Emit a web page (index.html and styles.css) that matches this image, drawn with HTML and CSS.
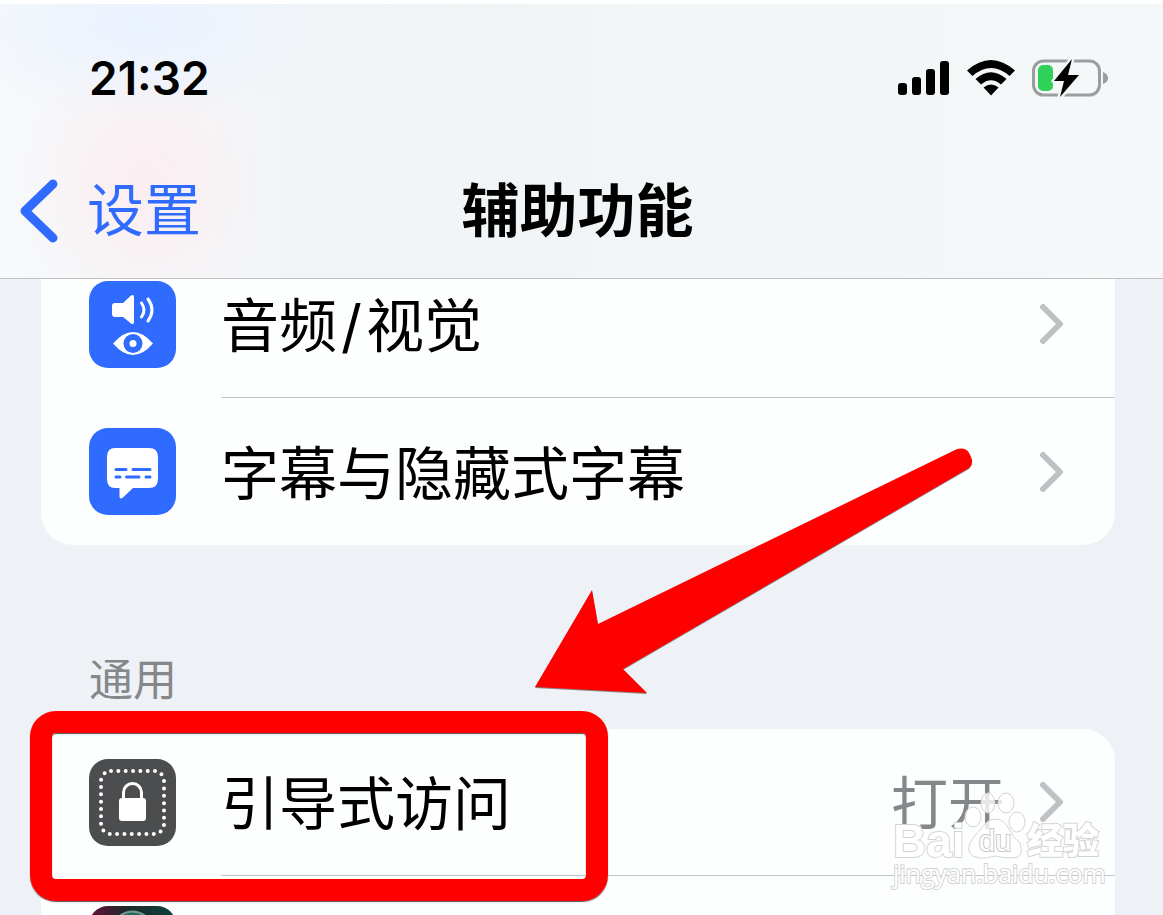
FILE: index.html
```html
<!DOCTYPE html>
<html lang="zh-CN">
<head>
<meta charset="utf-8">
<meta name="viewport" content="width=device-width, initial-scale=1">
<title>辅助功能</title>
<link rel="stylesheet" href="styles.css">
</head>
<body>
<div class="screen">
  <header class="header">
    <div class="status">
      <time class="clock">21:32</time>
      <div class="indicators">
        <svg class="signal" width="52" height="36" viewBox="0 0 52 36" aria-label="信号"><rect y="23" width="9" height="12" rx="3"/><rect x="14" y="17" width="9" height="18" rx="3"/><rect x="28" y="9" width="9" height="26" rx="3"/><rect x="42" y="1" width="9" height="34" rx="3"/></svg>
        <svg class="wifi" width="50" height="38" viewBox="0 0 50 38" aria-label="无线网络"><path d="M1 11.500Q25 -9.500 49 11.500L43.500 17Q25 1 6.500 17Z"/><path d="M9.500 20Q25 6.500 40.500 20L35 25.500Q25 17 15 25.500Z"/><path d="M17.500 28.500Q25 22.500 32.500 28.500L25 36.500Z"/></svg>
        <svg class="battery" width="76" height="40" viewBox="0 0 76 40" aria-label="正在充电"><rect x="1.500" y="3" width="66" height="34" rx="10" fill="none" stroke="#9b9d9f" stroke-width="3"/><path d="M71 14q5 2 5 6t-5 6z" fill="#9b9d9f"/><rect x="6" y="7" width="15" height="26" rx="5" fill="#30d158"/><path d="M40 1L22 23h10l-4 16L47 17H36z" fill="#000" stroke="#f4f7f8" stroke-width="5" paint-order="stroke" stroke-linejoin="round"/></svg>
      </div>
    </div>
    <nav class="navbar">
      <a class="back" href="#settings">
        <svg width="40" height="64" viewBox="0 0 40 64" aria-hidden="true"><path d="M34 5L6 32L34 59" fill="none" stroke="#2f6bff" stroke-width="9" stroke-linecap="round" stroke-linejoin="round"/></svg>
        <span>设置</span>
      </a>
      <h1 class="title">辅助功能</h1>
    </nav>
  </header>

  <main class="content">
    <ul class="group group-cut">
      <li class="row">
        <a class="row-link" href="#audio-visual">
          <svg class="icon" viewBox="0 0 87 87" aria-hidden="true"><rect width="87" height="87" rx="19" fill="#2f6bff"/><path d="M26 22h8L42 14.500Q45 13 45 16v25q0 3-3 1.500L34 36h-8q-3 0-3-3v-8q0-3 3-3z" fill="#fff"/><g fill="none" stroke="#fff" stroke-width="3" stroke-linecap="round"><path d="M52.500 22q5 7 0 14"/><path d="M59 18q8 11 0 22"/></g><path d="M24 62.500Q34 51 44 51T64 62.500Q54 74 44 74T24 62.500Z" fill="#fff"/><circle cx="44" cy="62.500" r="9.500" fill="#2f6bff"/><circle cx="44" cy="62.500" r="3.500" fill="#fff"/></svg>
          <span class="row-body"><span class="label">音频<span class="slash">/</span>视觉</span>
          <svg class="chevron" viewBox="0 0 26 42" aria-hidden="true"><path d="M4 4L21 21L4 38"/></svg></span>
        </a>
      </li>
      <li class="row">
        <a class="row-link" href="#captions">
          <svg class="icon" viewBox="0 0 87 87" aria-hidden="true"><rect width="87" height="87" rx="19" fill="#2f6bff"/><path d="M26 20H60Q69 20 69 29V51Q69 60 60 60H44L34 69.500Q31 71.500 30.500 69V60H26Q18 60 18 51V29Q18 20 26 20Z" fill="#fff"/><path d="M27 41.500H37M44 41.500H61M27 49H31M37.500 49H50M57 49H61" stroke="#2f6bff" stroke-width="3" stroke-linecap="round"/></svg>
          <span class="row-body"><span class="label">字幕与隐藏式字幕</span>
          <svg class="chevron" viewBox="0 0 26 42" aria-hidden="true"><path d="M4 4L21 21L4 38"/></svg></span>
        </a>
      </li>
    </ul>

    <h2 class="heading">通用</h2>
    <div class="general">
      <ul class="group">
        <li class="row">
          <a class="row-link" href="#guided-access">
            <svg class="icon" viewBox="0 0 87 87" aria-hidden="true"><rect width="87" height="87" rx="19" fill="#4b4d4e"/><rect x="12" y="12" width="63" height="63" rx="10" fill="none" stroke="#fff" stroke-width="4" stroke-linecap="round" stroke-dasharray="0 7.340"/><rect x="30" y="39" width="27" height="23" rx="3" fill="#fff"/><path d="M34.500 40V33.500a9 9 0 0 1 18 0V40" fill="none" stroke="#fff" stroke-width="3"/></svg>
            <span class="row-body"><span class="label">引导式访问</span>
            <span class="value">打开</span>
            <svg class="chevron" viewBox="0 0 26 42" aria-hidden="true"><path d="M4 4L21 21L4 38"/></svg></span>
          </a>
        </li>
        <li class="row">
          <a class="row-link" href="#siri" aria-label="Siri">
            <svg class="icon" viewBox="0 0 87 87" aria-hidden="true"><defs><linearGradient id="orb"><stop offset="0" stop-color="#6a0f3c"/><stop offset=".4" stop-color="#20262a"/><stop offset="1" stop-color="#07443a"/></linearGradient></defs><rect width="87" height="87" rx="19" fill="url(#orb)"/><ellipse cx="43.500" cy="43.500" rx="27" ry="38" fill="#28685a" stroke="#71998f" stroke-width="2"/></svg>
          </a>
        </li>
      </ul>
      <div class="highlight"></div>
      <svg class="watermark" width="224" height="104" viewBox="0 0 224 104">
        <g class="paw"><ellipse cx="87" cy="30" rx="8" ry="10"/><ellipse cx="102" cy="16" rx="7" ry="10"/><ellipse cx="120" cy="16" rx="8" ry="10"/><ellipse cx="131" cy="35" rx="8" ry="10"/><path d="M109 32Q118 32 123 42T134 56Q139 71 126 71Q118 71 109 69Q100 72 93 71Q79 69 84 56Q88 49 94 43Q101 32 109 32Z"/></g>
        <text class="wm-brand" x="7" y="70">Bai</text>
        <text class="wm-du" x="93" y="64">du</text>
        <text class="wm-cn" x="141" y="67">经验</text>
        <text class="wm-url" x="7" y="96">jingyan.baidu.com</text>
      </svg>
    </div>
    <svg class="arrow" width="450" height="260" viewBox="0 0 450 260" aria-hidden="true"><path d="M5 243L62 146L68 180L425 6Q437 1 441 13Q444 20 439 24L93 225L117 249Z" fill="#f00"/></svg>
  </main>
</div>
</body>
</html>
```

FILE: styles.css
```css
* {
  box-sizing: border-box;
}

body {
  margin: 0;
  background: #eef1f5;
  color: #000;
  font-family: Inter, "Noto Sans CJK SC", sans-serif;
}

a {
  color: inherit;
  text-decoration: none;
}

.screen {
  display: flex;
  flex-direction: column;
  height: 100vh;
  overflow: hidden;
}

.header {
  flex: none;
  border-top: 4px solid #fff;
  border-bottom: 1px solid #bfc1c3;
  background:
    radial-gradient(ellipse 200px 100px at 140px 20px, #eaf2ff, transparent),
    radial-gradient(ellipse 130px 150px at 145px 180px, #fbedf1, transparent),
    linear-gradient(90deg, #f7f9fb, #f1f4f6 30%, #f5f8f9);
}

.status {
  display: flex;
  align-items: center;
  justify-content: space-between;
  height: 150px;
  padding: 0 55px 2px 89px;
}

.clock {
  font-size: 46px;
  font-weight: 600;
}

.indicators {
  display: flex;
  align-items: center;
  gap: 16px;
}

.navbar {
  display: grid;
  grid-template-columns: 1fr auto 1fr;
  align-items: center;
  height: 124px;
  padding: 0 27px 10px 19px;
}

.back {
  display: flex;
  align-items: center;
  gap: 28px;
  color: #2f6bff;
  font-size: 57px;
  line-height: 80px;
}

.title {
  margin: 0;
  font-size: 58px;
  font-weight: 700;
  line-height: 80px;
}

.content {
  position: relative;
  flex: 1;
  min-height: 0;
}

.group {
  margin: 0 48px 0 41px;
  padding: 0;
  overflow: hidden;
  border-radius: 32px;
  background: #fdfefe;
  list-style: none;
}

.group-cut {
  border-radius: 0 0 32px 32px;
}

.row-link {
  display: flex;
  gap: 45px;
  padding-left: 48px;
}

.icon {
  flex: none;
  width: 87px;
  height: 87px;
  margin: 30px 0;
}

.row-body {
  display: flex;
  flex: 1;
  align-items: center;
  height: 147px;
  padding-right: 50px;
  border-bottom: 1px solid #c3c6c7;
  font-size: 58px;
  line-height: 86px;
}

.row:last-child .row-body {
  border-bottom: 0;
}

.group-cut .row:first-child {
  display: flex;
  flex-direction: column;
  justify-content: flex-end;
  height: 119px;
}

.label,
.value {
  padding-top: 4px;
}

.label {
  flex: 1;
}

.slash {
  padding: 0 4px;
}

.value {
  margin-right: 34px;
  color: #85888a;
  font-size: 57px;
}

.chevron {
  flex: none;
  width: 26px;
  height: 42px;
  fill: none;
  stroke: #c0c1c4;
  stroke-width: 6px;
  stroke-linecap: round;
  stroke-linejoin: round;
}

.heading {
  margin: 0;
  padding: 103px 89px 17px;
  color: #85888a;
  font-size: 44px;
  font-weight: 400;
  line-height: 64px;
}

.general {
  position: relative;
}

.highlight {
  position: absolute;
  top: -18px;
  left: 30px;
  width: 578px;
  height: 190px;
  border: 22px solid #f00;
  border-radius: 26px;
  box-shadow: 0 1px 1px #555, inset 0 1px 1px #555;
}

.arrow {
  position: absolute;
  top: 165px;
  left: 530px;
  filter: drop-shadow(0 1px 0 #888);
}

.watermark {
  position: absolute;
  top: 58px;
  right: 53px;
  fill: #fff;
  fill-opacity: 0.8;
  stroke: #d3d5d5;
  stroke-width: 1px;
}

.watermark text {
  paint-order: stroke;
  stroke-width: 2px;
  fill-opacity: 1;
}

.wm-brand {
  font: 700 46px "Liberation Sans", sans-serif;
}

.watermark .wm-du {
  font: 400 29px "Liberation Sans", sans-serif;
  stroke: #c6c8c8;
}

.wm-cn {
  font: 900 36px "Noto Sans CJK SC", sans-serif;
}

.wm-url {
  font: 400 25px "Open Sans", sans-serif;
}
```
